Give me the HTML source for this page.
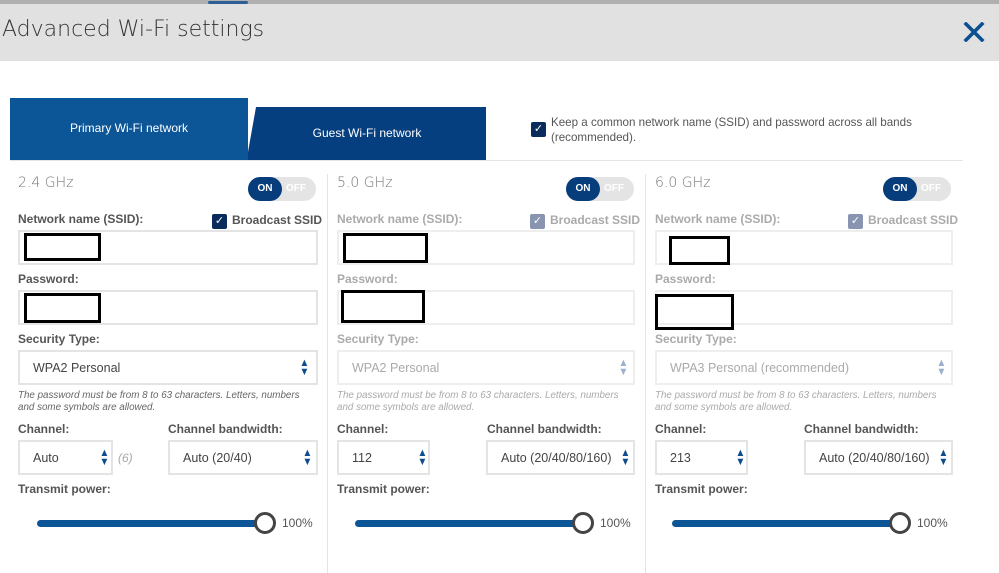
<!DOCTYPE html>
<html><head><meta charset="utf-8"><style>
*{box-sizing:border-box;margin:0;padding:0}
body{width:999px;height:573px;background:#fff;position:relative;overflow:hidden;font-family:"Liberation Sans",Arial,sans-serif}
.a{position:absolute;white-space:nowrap}
.col{width:300px;height:573px}
.topbar{left:0;top:0;width:999px;height:4px;background:#b0b0b0}
.hdr{left:0;top:4px;width:999px;height:57px;background:#e1e1e1}
.title{left:2px;top:17px;font-size:22px;color:#333;letter-spacing:0;font-family:"DejaVu Sans",sans-serif;font-weight:300}
.lbl{font-size:12px;font-weight:bold;color:#555}
.dis .lbl{color:#aaa}
.inp{border:2px solid #e4e4e4;background:#fff}
.dis .inp{border-color:#eee}
.red{border:3px solid #000}
.val{font-size:12.5px;color:#444}
.dis .val{color:#aaa}
.hint{font-size:9.8px;font-style:italic;color:#666;line-height:12px}
.dis .hint{color:#aaa}
.ghz{font-size:14px;color:#777;font-family:"DejaVu Sans",sans-serif;font-weight:300}
.tog{width:68px;height:24px;border-radius:12px;background:#e4e4e4}
.tog .on{position:absolute;left:0;top:0;width:34px;height:24px;border-radius:12px;background:#073d7b;color:#fff;font-size:10px;font-weight:bold;text-align:center;line-height:24px}
.tog .off{position:absolute;left:38px;top:0;font-size:10px;font-weight:bold;color:#fff;line-height:24px}
.cb{width:15px;height:15px;border-radius:2px;background:#0a2c5c;color:#fff;font-size:11px;text-align:center;line-height:15px}
.dis .cb{background:#8894b0}
.arr{font-size:11px;line-height:9px;color:#0d4d8e;text-align:center;transform:scaleX(.9)}
.dis .arr{color:#9bb0cc}
.track{height:7px;border-radius:4px;background:#0c5597}
.thumb{width:22px;height:22px;border-radius:50%;border:3.5px solid #444;background:#fff}
</style></head><body>
<div class="a topbar"></div>
<div class="a" style="left:208px;top:1px;width:40px;height:3px;background:#2d5f96;border-radius:2px"></div>
<div class="a hdr"></div>
<div class="a title">Advanced Wi-Fi settings</div>
<svg class="a" style="left:963px;top:22px" width="22" height="20" viewBox="0 0 22 20"><path d="M3 2L19 18M19 2L3 18" stroke="#0d4f8f" stroke-width="3.6" stroke-linecap="square"/></svg>

<div class="a" style="left:10px;top:98px;width:238px;height:62px;background:#0c5597"></div>
<div class="a" style="left:10px;top:121px;width:238px;text-align:center;color:#fff;font-size:12px">Primary Wi-Fi network</div>
<div class="a" style="left:248px;top:107px;width:238px;height:53px;background:#063f80;clip-path:polygon(8px 0,100% 0,100% 100%,0 100%,0 45px)"></div>
<div class="a" style="left:248px;top:126px;width:238px;text-align:center;color:#fff;font-size:12px">Guest Wi-Fi network</div>
<div class="a cb" style="left:531px;top:122px">✓</div>
<div class="a" style="left:551px;top:115px;font-size:11.6px;color:#555;line-height:15px">Keep a common network name (SSID) and password across all bands<br>(recommended).</div>
<div class="a" style="left:10px;top:160px;width:953px;height:1px;background:#e4e4e4"></div>
<div class="a" style="left:327px;top:174px;width:1px;height:399px;background:#e4e4e4"></div>
<div class="a" style="left:645px;top:174px;width:1px;height:399px;background:#e4e4e4"></div>

<div class="a col" style="left:18px;top:0">
 <div class="a ghz" style="left:0;top:175px">2.4 GHz</div>
 <div class="a tog" style="left:230px;top:177px"><div class="on">ON</div><div class="off">OFF</div></div>
 <div class="a lbl" style="left:0;top:212px">Network name (SSID):</div>
 <div class="a cb" style="left:194px;top:214px">✓</div>
 <div class="a lbl" style="left:214px;top:213px">Broadcast SSID</div>
 <div class="a inp" style="left:0;top:230px;width:300px;height:35px"></div>
 <div class="a red" style="left:6px;top:233px;width:77px;height:28px"></div>
 <div class="a lbl" style="left:0;top:272px">Password:</div>
 <div class="a inp" style="left:0;top:290px;width:300px;height:35px"></div>
 <div class="a red" style="left:6px;top:293px;width:77px;height:30px"></div>
 <div class="a lbl" style="left:0;top:332px">Security Type:</div>
 <div class="a inp" style="left:0;top:350px;width:300px;height:35px"></div>
 <div class="a val" style="left:15px;top:361px">WPA2 Personal</div>
 <div class="a arr" style="left:281px;top:359px">▲<br>▼</div>
 <div class="a hint" style="left:0;top:390px">The password must be from 8 to 63 characters. Letters, numbers<br>and some symbols are allowed.</div>
 <div class="a lbl" style="left:0;top:422px">Channel:</div>
 <div class="a lbl" style="left:150px;top:422px">Channel bandwidth:</div>
 <div class="a inp" style="left:0;top:440px;width:95px;height:35px"></div>
 <div class="a val" style="left:15px;top:451px">Auto</div>
 <div class="a arr" style="left:81px;top:449px">▲<br>▼</div>
 <div class="a" style="left:100px;top:451px;font-size:12px;font-style:italic;color:#aaa">(6)</div>
 <div class="a inp" style="left:150px;top:440px;width:150px;height:35px"></div>
 <div class="a val" style="left:165px;top:451px">Auto (20/40)</div>
 <div class="a arr" style="left:284px;top:449px">▲<br>▼</div>
 <div class="a lbl" style="left:0;top:482px">Transmit power:</div>
 <div class="a track" style="left:19px;top:520px;width:230px"></div>
 <div class="a thumb" style="left:236px;top:512px"></div>
 <div class="a" style="left:264px;top:516px;font-size:12px;color:#555">100%</div>
</div>

<div class="a col dis" style="left:337px;top:0">
 <div class="a ghz" style="left:0;top:175px">5.0 GHz</div>
 <div class="a tog" style="left:229px;top:177px"><div class="on">ON</div><div class="off">OFF</div></div>
 <div class="a lbl" style="left:0;top:212px">Network name (SSID):</div>
 <div class="a cb" style="left:193px;top:214px">✓</div>
 <div class="a lbl" style="left:213px;top:213px">Broadcast SSID</div>
 <div class="a inp" style="left:0;top:230px;width:298px;height:35px"></div>
 <div class="a red" style="left:6px;top:233px;width:85px;height:30px"></div>
 <div class="a lbl" style="left:0;top:272px">Password:</div>
 <div class="a inp" style="left:0;top:290px;width:298px;height:35px"></div>
 <div class="a red" style="left:4px;top:290px;width:84px;height:33px"></div>
 <div class="a lbl" style="left:0;top:332px">Security Type:</div>
 <div class="a inp" style="left:0;top:350px;width:298px;height:35px"></div>
 <div class="a val" style="left:15px;top:361px">WPA2 Personal</div>
 <div class="a arr" style="left:281px;top:359px">▲<br>▼</div>
 <div class="a hint" style="left:0;top:390px">The password must be from 8 to 63 characters. Letters, numbers<br>and some symbols are allowed.</div>
 <div class="a lbl" style="left:0;top:422px;color:#555">Channel:</div>
 <div class="a lbl" style="left:150px;top:422px;color:#555">Channel bandwidth:</div>
 <div class="a inp" style="left:0;top:440px;width:93px;height:35px;border-color:#e4e4e4"></div>
 <div class="a val" style="left:15px;top:451px;color:#444">112</div>
 <div class="a arr" style="left:80px;top:449px;color:#0d4d8e">▲<br>▼</div>
 <div class="a inp" style="left:149px;top:440px;width:149px;height:35px;border-color:#e4e4e4"></div>
 <div class="a val" style="left:164px;top:451px;color:#444">Auto (20/40/80/160)</div>
 <div class="a arr" style="left:283px;top:449px;color:#0d4d8e">▲<br>▼</div>
 <div class="a lbl" style="left:0;top:482px;color:#555">Transmit power:</div>
 <div class="a track" style="left:18px;top:520px;width:230px"></div>
 <div class="a thumb" style="left:235px;top:512px"></div>
 <div class="a" style="left:263px;top:516px;font-size:12px;color:#555">100%</div>
</div>

<div class="a col dis" style="left:655px;top:0">
 <div class="a ghz" style="left:0;top:175px">6.0 GHz</div>
 <div class="a tog" style="left:228px;top:177px"><div class="on">ON</div><div class="off">OFF</div></div>
 <div class="a lbl" style="left:0;top:212px">Network name (SSID):</div>
 <div class="a cb" style="left:193px;top:214px">✓</div>
 <div class="a lbl" style="left:213px;top:213px">Broadcast SSID</div>
 <div class="a inp" style="left:0;top:230px;width:298px;height:35px"></div>
 <div class="a red" style="left:14px;top:236px;width:61px;height:29px"></div>
 <div class="a lbl" style="left:0;top:272px">Password:</div>
 <div class="a inp" style="left:0;top:290px;width:298px;height:35px"></div>
 <div class="a red" style="left:0;top:294px;width:79px;height:36px"></div>
 <div class="a lbl" style="left:0;top:332px">Security Type:</div>
 <div class="a inp" style="left:0;top:350px;width:298px;height:35px"></div>
 <div class="a val" style="left:15px;top:361px">WPA3 Personal (recommended)</div>
 <div class="a arr" style="left:281px;top:359px">▲<br>▼</div>
 <div class="a hint" style="left:0;top:390px">The password must be from 8 to 63 characters. Letters, numbers<br>and some symbols are allowed.</div>
 <div class="a lbl" style="left:0;top:422px;color:#555">Channel:</div>
 <div class="a lbl" style="left:149px;top:422px;color:#555">Channel bandwidth:</div>
 <div class="a inp" style="left:0;top:440px;width:93px;height:35px;border-color:#e4e4e4"></div>
 <div class="a val" style="left:15px;top:451px;color:#444">213</div>
 <div class="a arr" style="left:80px;top:449px;color:#0d4d8e">▲<br>▼</div>
 <div class="a inp" style="left:149px;top:440px;width:149px;height:35px;border-color:#e4e4e4"></div>
 <div class="a val" style="left:164px;top:451px;color:#444">Auto (20/40/80/160)</div>
 <div class="a arr" style="left:283px;top:449px;color:#0d4d8e">▲<br>▼</div>
 <div class="a lbl" style="left:0;top:482px;color:#555">Transmit power:</div>
 <div class="a track" style="left:17px;top:520px;width:230px"></div>
 <div class="a thumb" style="left:234px;top:512px"></div>
 <div class="a" style="left:262px;top:516px;font-size:12px;color:#555">100%</div>
</div>
</body></html>
